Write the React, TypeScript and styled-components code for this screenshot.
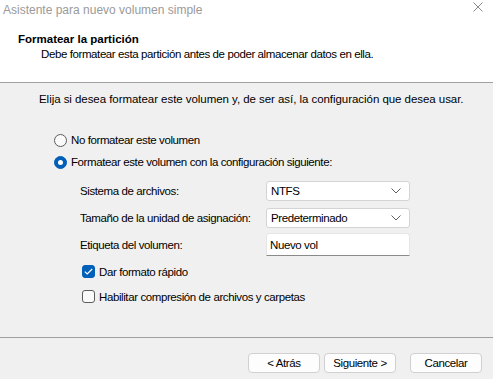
import React from "react";
import styled, { createGlobalStyle } from "styled-components";

const Global = createGlobalStyle`
  html, body { margin: 0; padding: 0; }
  body { background: #f0f0f0; font-family: "Liberation Sans", Arial, sans-serif; font-size: 11.5px; letter-spacing: -0.4px; color: #000; }
  * { box-sizing: border-box; }
`;

const Window = styled.div`
  width: 493px;
  height: 379px;
  display: flex;
  flex-direction: column;
  background: #f0f0f0;
  overflow: hidden;
`;

const Top = styled.div`
  height: 83px;
  background: #fff;
  border-bottom: 1px solid #a0a0a0;
  display: flex;
  flex-direction: column;
`;

const TitleBar = styled.div`
  height: 20px;
  display: flex;
  align-items: center;
  justify-content: space-between;
  padding: 0 10px 0 3px;
  color: #9a9a9a;
  font-size: 12px;
  letter-spacing: 0;
  & > svg {
    align-self: flex-start;
    margin-top: 2px;
  }
`;

const Header = styled.div`
  padding: 11px 0 0 18px;
  display: flex;
  flex-direction: column;
`;

const HeaderTitle = styled.div`
  font-weight: bold;
  line-height: 16px;
  letter-spacing: 0;
`;

const HeaderSub = styled.div`
  padding-left: 23px;
  line-height: 16px;
  margin-top: -1px;
`;

const Body = styled.div`
  height: 255px;
  border-bottom: 1px solid #a0a0a0;
  padding: 8px 0 0 39px;
  display: flex;
  flex-direction: column;
`;

const Intro = styled.div`
  line-height: 16px;
  letter-spacing: -0.05px;
  white-space: nowrap;
`;

const Options = styled.div`
  margin-top: 22px;
  padding-left: 15px;
  display: flex;
  flex-direction: column;
`;

const OptionRow = styled.div`
  height: 22px;
  display: flex;
  align-items: center;
  gap: 4px;
`;

const Radio = styled.span<{ $checked?: boolean }>`
  width: 13px;
  height: 13px;
  border-radius: 50%;
  display: inline-flex;
  align-items: center;
  justify-content: center;
  background: ${(p) => (p.$checked ? "#005fb8" : "#fafafa")};
  border: 1px solid ${(p) => (p.$checked ? "#005fb8" : "#5c5c5c")};
  &::after {
    content: "";
    display: ${(p) => (p.$checked ? "block" : "none")};
    width: 5px;
    height: 5px;
    border-radius: 50%;
    background: #fff;
  }
`;

const Form = styled.div`
  margin-top: 4px;
  padding-left: 41px;
  display: grid;
  grid-template-columns: 186px 144px;
  grid-auto-rows: 27px;
  align-items: center;
`;

const Label = styled.div`
  line-height: 16px;
  white-space: nowrap;
`;

const Select = styled.div`
  height: 20px;
  background: #fff;
  border: 1px solid #d4d4d4;
  border-radius: 3px;
  display: flex;
  align-items: center;
  justify-content: space-between;
  padding: 0 8px 0 4px;
`;

const TextBox = styled.div`
  height: 23px;
  background: #fff;
  border: 1px solid #e5e5e5;
  border-bottom: 1px solid #8a8a8a;
  border-radius: 3px 3px 0 0;
  display: flex;
  align-items: center;
  padding: 0 3px;
`;

const Checks = styled.div`
  margin-top: 1px;
  padding-left: 43px;
  display: flex;
  flex-direction: column;
`;

const CheckRow = styled.div`
  height: 25px;
  display: flex;
  align-items: center;
  gap: 4px;
`;

const Box = styled.span<{ $checked?: boolean }>`
  width: 13px;
  height: 13px;
  border-radius: 3px;
  display: inline-flex;
  align-items: center;
  justify-content: center;
  background: ${(p) => (p.$checked ? "#005fb8" : "#fafafa")};
  border: 1px solid ${(p) => (p.$checked ? "#005fb8" : "#5c5c5c")};
`;

const Footer = styled.div`
  flex: 1;
  display: flex;
  justify-content: flex-end;
  align-items: flex-start;
  padding: 15px 11px 0 0;
`;

const Button = styled.button<{ $gap?: number }>`
  width: 72px;
  height: 20px;
  margin-left: ${(p) => p.$gap ?? 0}px;
  background: #fdfdfd;
  border: 1px solid #d0d0d0;
  border-radius: 4px;
  font-family: inherit;
  font-size: 11.5px;
  letter-spacing: -0.4px;
  color: #000;
  padding: 0;
`;

const Chevron = () => (
  <svg width="10" height="6" viewBox="0 0 10 6">
    <path d="M0.5 0.5 L5 5 L9.5 0.5" fill="none" stroke="#606060" strokeWidth="1" />
  </svg>
);

const Close = () => (
  <svg width="10" height="10" viewBox="0 0 10 10">
    <path d="M0.5 0.5 L9.5 9.5 M9.5 0.5 L0.5 9.5" fill="none" stroke="#8a8a8a" strokeWidth="1" />
  </svg>
);

const Check = () => (
  <svg width="9" height="7" viewBox="0 0 9 7">
    <path d="M0.8 3.6 L3.2 6 L8.2 1" fill="none" stroke="#fff" strokeWidth="1.2" />
  </svg>
);

export default function App() {
  return (
    <Window>
      <Global />
      <Top>
        <TitleBar>
          <span>Asistente para nuevo volumen simple</span>
          <Close />
        </TitleBar>
        <Header>
          <HeaderTitle>Formatear la partición</HeaderTitle>
          <HeaderSub>Debe formatear esta partición antes de poder almacenar datos en ella.</HeaderSub>
        </Header>
      </Top>
      <Body>
        <Intro>Elija si desea formatear este volumen y, de ser así, la configuración que desea usar.</Intro>
        <Options>
          <OptionRow>
            <Radio />
            <span>No formatear este volumen</span>
          </OptionRow>
          <OptionRow>
            <Radio $checked />
            <span>Formatear este volumen con la configuración siguiente:</span>
          </OptionRow>
        </Options>
        <Form>
          <Label>Sistema de archivos:</Label>
          <Select>
            <span>NTFS</span>
            <Chevron />
          </Select>
          <Label>Tamaño de la unidad de asignación:</Label>
          <Select>
            <span>Predeterminado</span>
            <Chevron />
          </Select>
          <Label>Etiqueta del volumen:</Label>
          <TextBox>Nuevo vol</TextBox>
        </Form>
        <Checks>
          <CheckRow>
            <Box $checked>
              <Check />
            </Box>
            <span>Dar formato rápido</span>
          </CheckRow>
          <CheckRow>
            <Box />
            <span>Habilitar compresión de archivos y carpetas</span>
          </CheckRow>
        </Checks>
      </Body>
      <Footer>
        <Button>&lt; Atrás</Button>
        <Button $gap={4}>Siguiente &gt;</Button>
        <Button $gap={14}>Cancelar</Button>
      </Footer>
    </Window>
  );
}
